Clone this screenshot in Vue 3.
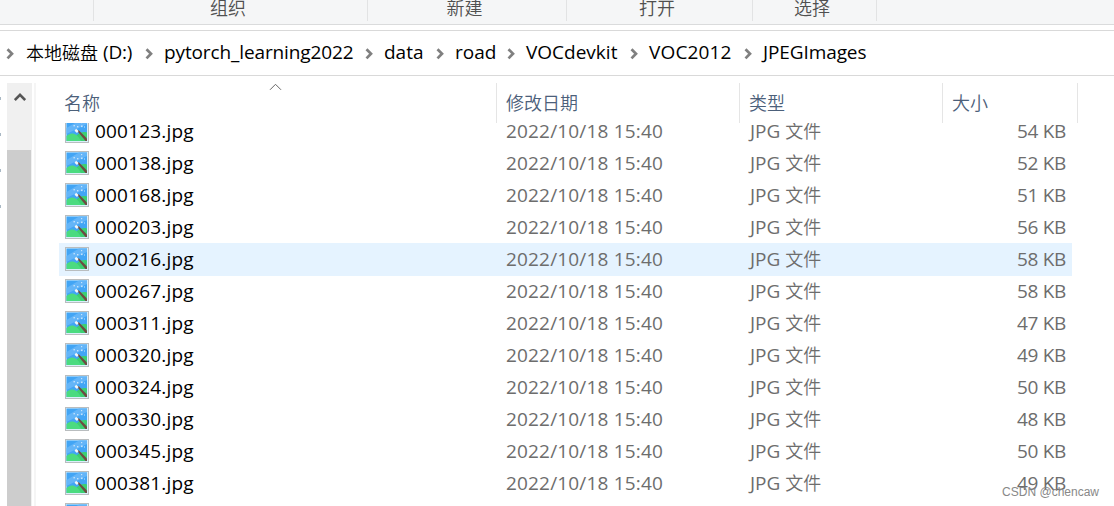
<template>
  <div class="explorer">
    <div class="ribbon">
      <div v-for="(group, i) in ribbonGroups" :key="i" class="ribbon-group">{{ group }}</div>
    </div>

    <div class="address-bar">
      <div v-for="crumb in crumbs" :key="crumb.name" class="crumb" :class="crumb.cls">
        <svg class="chevron" width="9" height="12" viewBox="0 0 9 12">
          <path d="M1.5 1.2 L6 5.8 L1.5 10.4" fill="none" stroke="#808080" stroke-width="2.7" />
        </svg>
        <span v-if="crumb.cn" class="cn">{{ crumb.cn }}</span>
        <span class="crumb-name">{{ crumb.name }}</span>
      </div>
    </div>

    <div class="content">
      <div class="nav-pane">
        <span v-for="n in 4" :key="n" class="pin"></span>
      </div>
      <div class="scrollbar">
        <div class="scroll-up">
          <svg width="12" height="10" viewBox="0 0 12 10">
            <path d="M0.8 8 L6 2.8 L11.2 8" fill="none" stroke="#555" stroke-width="2.6" />
          </svg>
        </div>
        <div class="scroll-thumb"></div>
      </div>
      <div class="splitter"></div>

      <div class="file-list">
        <div class="list-header">
          <div class="th th-name">
            名称
            <svg class="sort-arrow" width="13" height="8" viewBox="0 0 13 8">
              <path d="M1 6.8 L6.5 1.3 L12 6.8" fill="none" stroke="#666" stroke-width="1" />
            </svg>
          </div>
          <div class="th">修改日期</div>
          <div class="th">类型</div>
          <div class="th">大小</div>
        </div>

        <div class="list-body">
          <div
            v-for="file in files"
            :key="file.name"
            class="row"
            :class="{ active: file.name === activeFile }"
          >
            <div class="td td-name">
              <svg class="file-icon" width="24" height="24" viewBox="0 0 24 24">
                <rect width="24" height="24" fill="#b9bdbf" />
                <rect x="1" y="1" width="22" height="22" fill="#d9effb" />
                <rect x="1.5" y="1.5" width="20.5" height="20.5" fill="#42a5f5" />
                <path d="M1.5 9 L14 1.5 H22 V5 L1.5 15Z" fill="#64b5f8" />
                <path d="M9 22 C11 15 16 12 22 13.5 V22Z" fill="#3ccf72" />
                <path d="M1.5 17 C6 12.5 12 14 16 22 H1.5Z" fill="#4bdb80" />
                <path d="M12.3 12 L13.5 11 L22 19.5 V22 H20.5Z" fill="#6d4c41" />
                <path d="M10.3 10.8 L12.8 13" stroke="#f5f7f8" stroke-width="2.5" />
                <g fill="#c5e4fc">
                  <rect x="8.5" y="6" width="1.4" height="1.4" />
                  <rect x="12" y="7" width="1.4" height="1.4" />
                  <rect x="16" y="3" width="1.2" height="1.2" />
                  <rect x="16" y="6.5" width="1.6" height="1.6" />
                  <rect x="19" y="7.5" width="1" height="1" />
                </g>
              </svg>
              <span>{{ file.name }}</span>
            </div>
            <div class="td td-date">{{ file.date }}</div>
            <div class="td td-type">JPG <span class="cn">文件</span></div>
            <div class="td td-size">{{ file.size }} KB</div>
          </div>
        </div>
      </div>
    </div>

    <div class="watermark">CSDN @chencaw</div>
  </div>
</template>

<script setup>
import { ref } from 'vue'

const ribbonGroups = ['', '组织', '新建', '打开', '选择']

const crumbs = [
  { cn: '本地磁盘', name: '(D:)', cls: 'c-disk' },
  { name: 'pytorch_learning2022', cls: 'c-project' },
  { name: 'data', cls: 'c-data' },
  { name: 'road', cls: 'c-road' },
  { name: 'VOCdevkit', cls: 'c-devkit' },
  { name: 'VOC2012', cls: 'c-voc' },
  { name: 'JPEGImages', cls: 'c-images' }
]

const activeFile = ref('000216.jpg')

// 文件编号和大小
const files = [
  ['000123', 54],
  ['000138', 52],
  ['000168', 51],
  ['000203', 56],
  ['000216', 58],
  ['000267', 58],
  ['000311', 47],
  ['000320', 49],
  ['000324', 50],
  ['000330', 48],
  ['000345', 50],
  ['000381', 49],
  ['000385', 50]
].map(([id, size]) => ({
  name: `${id}.jpg`,
  date: '2022/10/18 15:40',
  size
}))
</script>

<style>
body {
  margin: 0;
  overflow: hidden;
}
</style>

<style scoped>
.explorer {
  position: relative;
  display: flex;
  flex-direction: column;
  width: 1114px;
  height: 506px;
  overflow: hidden;
  background: #fff;
  font-family: "Open Sans", "Noto Sans CJK SC", sans-serif;
  font-size: 19px;
  color: #000;
}

.cn {
  font-family: "Noto Sans CJK SC", sans-serif;
  font-size: 18px;
  font-weight: 350;
  line-height: 1;
}

.ribbon {
  display: grid;
  grid-template-columns: 94px 274px 199px 186px 124px;
  flex: none;
  box-sizing: border-box;
  height: 25px;
  background: #f5f6f7;
  border-bottom: 1px solid #dadbdc;
}

.ribbon-group {
  box-sizing: border-box;
  height: 21px;
  border-right: 1px solid #e2e3e4;
  text-align: center;
  line-height: 15px;
  padding-right: 5px;
  font-family: "Noto Sans CJK SC", sans-serif;
  font-size: 18px;
  font-weight: 350;
  color: #505050;
}

.address-bar {
  display: grid;
  grid-template-columns: 139px 219px 71px 71px 123px 114px 130px;
  flex: none;
  box-sizing: border-box;
  height: 46px;
  margin-top: 5px;
  padding-left: 6px;
  border-top: 1px solid #d9d9d9;
  border-bottom: 1px solid #d9d9d9;
}

.crumb {
  display: flex;
  align-items: center;
  height: 42px;
  white-space: nowrap;
}

.chevron {
  flex: none;
  margin-right: 10px;
  margin-top: 3px;
}

.c-disk .chevron {
  margin-right: 11px;
}

.c-disk .cn {
  margin-right: 5px;
}

.c-disk .crumb-name {
  letter-spacing: -0.2px;
}

.c-project .crumb-name {
  letter-spacing: -0.12px;
}

.c-data,
.c-devkit,
.c-voc,
.c-images {
  padding-left: 1px;
}

.c-road {
  padding-left: 1px;
}

.c-voc .crumb-name {
  letter-spacing: 0.15px;
}

.c-images .crumb-name {
  letter-spacing: -0.1px;
}

.content {
  display: flex;
  flex: 1;
  padding-top: 7px;
  min-height: 0;
}

.nav-pane {
  display: flex;
  flex-direction: column;
  gap: 33px;
  width: 7px;
  padding-top: 14px;
  box-sizing: border-box;
}

.pin {
  flex: none;
  width: 1px;
  height: 3px;
  background: #a9b8c4;
}

.scrollbar {
  display: flex;
  flex-direction: column;
  width: 25px;
  background: #f0f0f0;
}

.scroll-up {
  display: flex;
  justify-content: center;
  box-sizing: border-box;
  height: 67px;
  padding-top: 9px;
}

.scroll-thumb {
  flex: 1;
  width: 24px;
  background: #cdcdcd;
}

.splitter {
  width: 2px;
  margin-left: 2px;
  background: #f5f5f5;
}

.file-list {
  flex: 1;
  display: flex;
  flex-direction: column;
  padding-left: 23px;
}

.list-header {
  display: grid;
  grid-template-columns: 438px 243px 203px 135px;
  flex: none;
  height: 40px;
}

.th {
  position: relative;
  box-sizing: border-box;
  height: 40px;
  padding-left: 9px;
  border-right: 1px solid #e5e5e5;
  font-family: "Noto Sans CJK SC", sans-serif;
  font-size: 18px;
  font-weight: 350;
  line-height: 39px;
  color: #4c607a;
}

.th-name {
  padding-left: 5px;
}

.sort-arrow {
  position: absolute;
  left: 210px;
  top: 0;
}

.list-body {
  flex: 1;
  display: flex;
  flex-direction: column;
  justify-content: flex-start;
  min-height: 0;
  overflow: hidden;
}

.row {
  display: grid;
  grid-template-columns: 447px 243px 203px 120px;
  flex: none;
  width: 1013px;
  height: 32px;
}

/* 第一行被表头遮住一部分 */
.row:first-child {
  margin-top: -8px;
}

.row.active {
  background: #e5f3ff;
  box-shadow: 0 1px #e5f3ff;
}

.td {
  height: 32px;
  line-height: 33px;
  white-space: nowrap;
  color: #6d6d6d;
}

.td-name {
  display: flex;
  align-items: center;
  box-sizing: border-box;
  padding-left: 6px;
  letter-spacing: 0.18px;
  color: #000;
}

.file-icon {
  flex: none;
  margin-right: 6px;
}

.td-date {
  letter-spacing: 0.17px;
}

.td-type {
  padding-left: 1px;
}

.td-size {
  text-align: right;
  padding-right: 6px;
  letter-spacing: -0.3px;
}

.watermark {
  position: absolute;
  right: 15px;
  bottom: 6px;
  font-family: "Liberation Sans", sans-serif;
  font-size: 12px;
  line-height: 16px;
  color: #888;
}
</style>
